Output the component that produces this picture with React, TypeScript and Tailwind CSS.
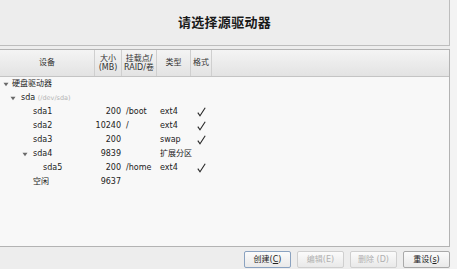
import React from "react";

const font = { fontFamily: '"DejaVu Sans", "Noto Sans CJK SC", sans-serif' };

function Tri({ className = "" }: { className?: string }) {
  return (
    <svg width="6" height="5" viewBox="0 0 6 5" className={className}>
      <path d="M0.5 0.8 L5.5 0.8 L3 4.3 Z" fill="#6a6a6a" />
    </svg>
  );
}

function Check() {
  return (
    <svg width="9" height="10" viewBox="0 0 9 10">
      <path d="M0.8 5.6 L3 8.8 L8.2 0.8" fill="none" stroke="#2a2a2a" strokeWidth="1.1" />
    </svg>
  );
}

type Row = {
  indent: number;
  tri?: boolean;
  name: React.ReactNode;
  size?: string;
  mount?: string;
  type?: string;
  check?: boolean;
};

const rows: Row[] = [
  { indent: 3, tri: true, name: <span className="text-[8px]">硬盘驱动器</span> },
  {
    indent: 10,
    tri: true,
    name: (
      <span>
        sda <span className="text-[6.5px] text-[#b4b4b4]">(/dev/sda)</span>
      </span>
    ),
  },
  { indent: 33, name: "sda1", size: "200", mount: "/boot", type: "ext4", check: true },
  { indent: 33, name: "sda2", size: "10240", mount: "/", type: "ext4", check: true },
  { indent: 33, name: "sda3", size: "200", type: "swap", check: true },
  { indent: 22, tri: true, name: "sda4", size: "9839", type: "扩展分区" },
  { indent: 43, name: "sda5", size: "200", mount: "/home", type: "ext4", check: true },
  { indent: 33, name: <span className="text-[8px]">空闲</span>, size: "9637" },
];

function Btn({ label, u, pre, disabled, primary }: { label: string; u: string; pre?: string; disabled?: boolean; primary?: boolean }) {
  return (
    <div
      className={`w-[47px] h-[17px] rounded-[2px] border flex items-center justify-center text-[8px] bg-gradient-to-b from-[#fbfbfb] to-[#e9e9e9] ${
        disabled ? "border-[#cfcfcf] text-[#b0b0b0]" : primary ? "border-[#8aa2c0] text-[#222]" : "border-[#a9a9a9] text-[#222]"
      }`}
    >
      <span>
        {label}
        {pre ?? "("}
        <span className={disabled ? "" : "underline"}>{u}</span>)
      </span>
    </div>
  );
}

export default function App() {
  return (
    <div className="w-[457px] h-[269px] flex bg-[#ededed] overflow-hidden text-[#222]" style={font}>
      <div className="w-[450px] flex flex-col">
        <div className="h-[46px] shrink-0 border-b border-r border-[#bdbdbd] flex items-center justify-center">
          <span className="text-[13px] font-bold text-[#1a1a1a] tracking-[0.3px]">请选择源驱动器</span>
        </div>
        <div className="mt-[3px] h-[198px] shrink-0 border border-l-0 border-[#b3b3b3] bg-[#f8f8f8] flex flex-col">
          <div className="h-[27px] shrink-0 flex border-b border-[#c4c4c4] bg-gradient-to-b from-[#f4f4f4] to-[#e3e3e3] text-[8px] leading-[9.5px] text-[#333]">
            <div className="w-[95px] border-r border-[#cfcfcf] flex items-center justify-center">设备</div>
            <div className="w-[27px] border-r border-[#cfcfcf] flex flex-col items-center justify-center text-center">
              <span>大小</span>
              <span>(MB)</span>
            </div>
            <div className="w-[35px] border-r border-[#cfcfcf] flex flex-col items-center justify-center text-center">
              <span>挂载点/</span>
              <span>RAID/卷</span>
            </div>
            <div className="w-[34px] border-r border-[#cfcfcf] flex items-center justify-center">类型</div>
            <div className="w-[21px] border-r border-[#cfcfcf] flex items-center justify-center">格式</div>
            <div className="flex-1" />
          </div>
          <div className="flex flex-col text-[8px]">
            {rows.map((r, i) => (
              <div key={i} className="h-[14px] flex items-center">
                <div className="w-[95px] relative flex items-center h-full">
                  {r.tri && (
                    <div className="absolute top-[5px]" style={{ left: r.indent }}>
                      <Tri />
                    </div>
                  )}
                  <div style={{ paddingLeft: r.tri ? r.indent + (r.indent === 3 ? 9 : 11) : r.indent }}>{r.name}</div>
                </div>
                <div className="w-[27px] text-right pr-[1px] whitespace-nowrap flex justify-end">{r.size}</div>
                <div className="w-[35px] pl-[4px]">{r.mount}</div>
                <div className="w-[34px] pl-[3px] whitespace-nowrap">{r.type}</div>
                <div className="w-[21px] flex justify-center">{r.check && <Check />}</div>
              </div>
            ))}
          </div>
        </div>
        <div className="mt-[4px] flex justify-end gap-[6px]">
          <Btn label="创建" u="C" primary />
          <Btn label="编辑" u="E" disabled />
          <Btn label="删除" pre=" (" u="D" disabled />
          <Btn label="重设" u="s" />
        </div>
      </div>
      <div className="flex-1 bg-[#f3f3f3]" />
    </div>
  );
}
